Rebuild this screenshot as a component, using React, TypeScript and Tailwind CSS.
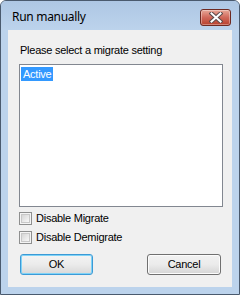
function CloseButton() {
  return (
    <div className="flex h-[17px] w-[31px] items-center justify-center rounded-[3px] border border-[#6e2a22] bg-gradient-to-b from-[#e7a798] via-[#d0685a] to-[#b8402c] shadow-[inset_0_0_0_1px_rgba(255,255,255,0.35)]">
      <svg width="14" height="11" viewBox="0 0 14 11">
        <path d="M2.5 1.5 L11.5 9.5 M11.5 1.5 L2.5 9.5" stroke="#5a4a4a" strokeWidth="4" strokeLinecap="square" />
        <path d="M2.5 1.5 L11.5 9.5 M11.5 1.5 L2.5 9.5" stroke="#ffffff" strokeWidth="2" strokeLinecap="square" />
      </svg>
    </div>
  );
}

function CheckRow({ label }: { label: string }) {
  return (
    <div className="flex h-[13px] items-center gap-[4px]">
      <div className="h-[13px] w-[13px] border border-[#8e8f8f] bg-[#f4f4f4] p-[1px]">
        <div className="h-full w-full border border-[#c8c8c8] bg-gradient-to-br from-[#d6d6d6] to-[#f8f8f8]" />
      </div>
      <span className="leading-[13px]">{label}</span>
    </div>
  );
}

function Button({ label, focused }: { label: string; focused?: boolean }) {
  return (
    <div
      className={
        focused
          ? "flex h-[21px] w-[73px] items-center justify-center rounded-[3px] border border-[#3c9ad6] bg-gradient-to-b from-[#f4f4f4] via-[#ebebeb] to-[#d8d8d8] shadow-[inset_0_0_0_1px_#7fd3f7]"
          : "flex h-[21px] w-[74px] items-center justify-center rounded-[3px] border border-[#707070] bg-gradient-to-b from-[#f2f2f2] via-[#ebebeb] to-[#d5d5d5] shadow-[inset_0_0_0_1px_#fcfcfc]"
      }
    >
      {label}
    </div>
  );
}

export default function App() {
  return (
    <div className="h-[295px] w-[240px] bg-white">
      <div className="flex h-[295px] w-[240px] flex-col rounded-t-[6px] border border-[#4a5a6e] bg-[#bcd3ec]">
        {/* Title bar */}
        <div className="flex h-[29px] items-start justify-between rounded-t-[5px] bg-gradient-to-b from-[#aec7e4] to-[#bcd3ec] pl-[11px] pr-[8px]">
          <span
            className="mt-[8px] text-[12px] leading-[16px] tracking-[-0.3px] text-black"
            style={{ fontFamily: '"Noto Sans", "Open Sans", sans-serif' }}
          >
            Run manually
          </span>
          <div className="mt-[8px]">
            <CloseButton />
          </div>
        </div>

        {/* Client area */}
        <div
          className="mx-[7px] flex h-[257px] flex-col bg-[#f0f0f0] pl-[11px] pr-[9px] pt-[14px] text-[11px] tracking-[-0.25px] text-black"
          style={{ fontFamily: '"Liberation Sans", Arial, sans-serif' }}
        >
          <div className="h-[13px] pl-[1px] leading-[13px]">Please select a migrate setting</div>

          <div className="mt-[7px] h-[143px] w-[204px] border border-[#828790] bg-white p-[1px]">
            <div className="inline-block h-[14px] bg-[#3399ff] px-[2px] leading-[14px] text-white">Active</div>
          </div>

          <div className="mt-[5px] flex flex-col gap-[6px]">
            <CheckRow label="Disable Migrate" />
            <CheckRow label="Disable Demigrate" />
          </div>

          <div className="mt-[10px] flex justify-between pl-[1px] pr-[2px]">
            <Button label="OK" focused />
            <Button label="Cancel" />
          </div>
        </div>
      </div>
    </div>
  );
}
